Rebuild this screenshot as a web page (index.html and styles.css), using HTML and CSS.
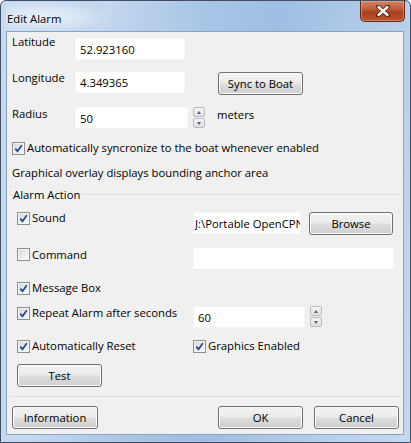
FILE: index.html
```html
<!DOCTYPE html>
<html>
<head>
<meta charset="utf-8">
<link rel="stylesheet" href="styles.css">
</head>
<body>
<div class="window">
  <div class="titlebar">
    <span class="title">Edit Alarm</span>
    <div class="close">
      <svg width="16" height="12" viewBox="0 0 16 12"><path d="M3 1.5 L13 10.5 M13 1.5 L3 10.5" stroke="#5a2010" stroke-width="4" stroke-linecap="round"/><path d="M3.5 2 L12.5 10 M12.5 2 L3.5 10" stroke="#ffffff" stroke-width="2.4" stroke-linecap="round"/></svg>
    </div>
  </div>
  <div class="client">
    <div class="row r-lat">
      <span class="lbl">Latitude</span>
      <div class="input w110 mt4">52.923160</div>
    </div>
    <div class="row r-lon">
      <span class="lbl">Longitude</span>
      <div class="input w110 mt1">4.349365</div>
      <div class="btn sync">Sync to Boat</div>
    </div>
    <div class="row r-rad">
      <span class="lbl">Radius</span>
      <div class="input w113 mt1">50</div>
      <div class="spin spin-rad"><span class="sb up"></span><span class="sb down"></span></div>
      <span class="meters">meters</span>
    </div>
    <div class="row r-auto">
      <span class="cb"><span class="box"><svg width="9" height="9" viewBox="0 0 9 9"><path d="M1.3 4.6 L3.5 7.2 L7.8 1.2" fill="none" stroke="#2b4a8b" stroke-width="1.8"/></svg></span>Automatically syncronize to the boat whenever enabled</span>
    </div>
    <div class="row r-graph">Graphical overlay displays bounding anchor area</div>
    <fieldset class="group">
      <legend>Alarm Action</legend>
      <div class="row">
        <span class="cb col1"><span class="box"><svg width="9" height="9" viewBox="0 0 9 9"><path d="M1.3 4.6 L3.5 7.2 L7.8 1.2" fill="none" stroke="#2b4a8b" stroke-width="1.8"/></svg></span>Sound</span>
        <div class="input w108 mt2 path"><span class="clip">J:\Portable OpenCPN</span></div>
        <div class="btn browse">Browse</div>
      </div>
      <div class="row g-cmd">
        <span class="cb col1 cb-top1"><span class="box"></span>Command</span>
        <div class="input w201"></div>
      </div>
      <div class="row g-msg">
        <span class="cb col1"><span class="box"><svg width="9" height="9" viewBox="0 0 9 9"><path d="M1.3 4.6 L3.5 7.2 L7.8 1.2" fill="none" stroke="#2b4a8b" stroke-width="1.8"/></svg></span>Message Box</span>
      </div>
      <div class="row g-rep">
        <span class="cb col1"><span class="box"><svg width="9" height="9" viewBox="0 0 9 9"><path d="M1.3 4.6 L3.5 7.2 L7.8 1.2" fill="none" stroke="#2b4a8b" stroke-width="1.8"/></svg></span>Repeat Alarm after seconds</span>
        <div class="input w112 mt1">60</div>
        <div class="spin spin-rep"><span class="sb up"></span><span class="sb down"></span></div>
      </div>
      <div class="row g-reset">
        <span class="cb col1"><span class="box"><svg width="9" height="9" viewBox="0 0 9 9"><path d="M1.3 4.6 L3.5 7.2 L7.8 1.2" fill="none" stroke="#2b4a8b" stroke-width="1.8"/></svg></span>Automatically Reset</span>
        <span class="cb"><span class="box"><svg width="9" height="9" viewBox="0 0 9 9"><path d="M1.3 4.6 L3.5 7.2 L7.8 1.2" fill="none" stroke="#2b4a8b" stroke-width="1.8"/></svg></span>Graphics Enabled</span>
      </div>
      <div class="row g-test">
        <div class="btn test">Test</div>
      </div>
    </fieldset>
    <div class="row footer">
      <div class="btn info">Information</div>
      <div class="btn ok">OK</div>
      <div class="btn cancel">Cancel</div>
    </div>
  </div>
</div>
</body>
</html>
```
FILE: styles.css
```css
* { box-sizing: border-box; }
body {
  margin: 0;
  background: #ffffff;
  font-family: "Open Sans", "Noto Sans", sans-serif;
  font-size: 11.3px;
  line-height: 15px;
  color: #000;
}
.window {
  width: 411px;
  height: 443px;
  border: 1px solid #3f4f66;
  border-radius: 6px 6px 0 0;
  background: linear-gradient(100deg, #c8dbf0 0%, #c3d7ee 22%, #a9c5e6 42%, #9fbee3 58%, #b3cce9 78%, #c5d9ef 100%);
  padding: 0 6px 7px 5px;
  display: flex;
  flex-direction: column;
}
.titlebar {
  height: 30px;
  display: flex;
  align-items: flex-start;
  padding-left: 1px;
  background: radial-gradient(ellipse 70px 16px at 34px 16px, rgba(235,243,251,0.9) 0%, rgba(225,236,248,0.6) 60%, rgba(225,236,248,0) 100%);
}
.title {
  margin-top: 10px;
  color: #000;
}
.close {
  margin-left: auto;
  margin-right: -1px;
  width: 45px;
  height: 21px;
  border: 1px solid #5d2a1c;
  border-top: none;
  border-radius: 0 0 5px 5px;
  background: linear-gradient(#d08468 0%, #c05d3d 40%, #a9411f 55%, #b9532f 100%);
  box-shadow: inset 0 0 0 1px rgba(255,200,170,0.4);
  display: flex;
  align-items: center;
  justify-content: center;
}
.client {
  flex: 1;
  background: #f0f0f0;
  border: 1px solid #8aa4c3;
  padding: 0 5px;
  display: flex;
  flex-direction: column;
}
.row {
  display: flex;
  align-items: flex-start;
}
.lbl { width: 63px; }
.input {
  height: 22px;
  line-height: 22px;
  background: #ffffff;
  border: 1px solid #f6f6f6;
  padding-left: 4px;
  white-space: nowrap;
  overflow: hidden;
}
.w110 { width: 110px; }
.w113 { width: 113px; }
.w108 { width: 108px; }
.w112 { width: 112px; }
.w201 { width: 201px; }
.mt1 { margin-top: 1px; }
.mt2 { margin-top: 2px; }
.mt4 { margin-top: 4px; }
.path { padding-left: 1px; }
.clip { display: block; width: 105px; overflow: hidden; white-space: nowrap; }
.btn {
  height: 23px;
  line-height: 21px;
  text-align: center;
  border: 1px solid #707070;
  border-radius: 3px;
  background: linear-gradient(#f3f3f3 0%, #ebebeb 48%, #dddddd 52%, #cfcfcf 100%);
  box-shadow: inset 0 0 0 1px #fbfbfb;
}
.r-lat { margin-top: 2px; }
.r-lon { margin-top: 10px; }
.sync { width: 85px; margin-left: 33px; margin-top: 2px; }
.r-rad { margin-top: 11px; }
.spin {
  width: 12px;
  display: flex;
  flex-direction: column;
  gap: 1px;
  margin-left: 5px;
  margin-top: 1px;
}
.sb {
  height: 10px;
  border: 1px solid #b7bcc4;
  border-radius: 2px;
  background: linear-gradient(#f5f5f5, #dcdfe4);
  position: relative;
}
.sb::after {
  content: "";
  position: absolute;
  left: 3px;
  width: 0;
  height: 0;
  border-left: 2px solid transparent;
  border-right: 2px solid transparent;
}
.up::after { top: 3px; border-bottom: 3px solid #5a5f68; }
.down::after { top: 3px; border-top: 3px solid #5a5f68; }
.meters { margin-left: 12px; margin-top: 1px; }
.r-auto { margin-top: 11px; }
.r-graph { margin-top: 10px; }
.cb {
  display: flex;
  align-items: flex-start;
  gap: 2px;
}
.box {
  width: 13px;
  height: 13px;
  margin-top: 2px;
  border: 1px solid #8e8f8f;
  background: linear-gradient(135deg, #d3d6db 0%, #eceef0 60%, #fbfbfb 100%);
  box-shadow: inset 0 0 0 1px #f2f3f4;
  display: flex;
  align-items: center;
  justify-content: center;
  flex: none;
}
.cb-top1 .box { margin-top: 1px; }
.col1 { width: 176px; }
.group {
  margin: 7px -2px 0 -2px;
  border: none;
  border-top: 1px solid #d5dfe5;
  border-bottom: 1px solid #d5dfe5;
  padding: 8px 0 9px 7px;
  min-width: 0;
}
.group legend {
  margin-left: -6px;
  padding: 0 2px;
  line-height: 15px;
}
.g-cmd { margin-top: 12px; }
.g-msg { margin-top: 11px; }
.g-rep { margin-top: 10px; }
.spin-rep { margin-top: 1px; }
.g-reset { margin-top: 10px; }
.g-test { margin-top: 11px; }
.test { width: 85px; }
.browse { width: 84px; margin-left: 8px; margin-top: 2px; }
.footer { margin-top: 9px; margin-right: -1px; }
.info { width: 86px; }
.ok { width: 85px; margin-left: auto; }
.cancel { width: 85px; margin-left: 11px; }
```
